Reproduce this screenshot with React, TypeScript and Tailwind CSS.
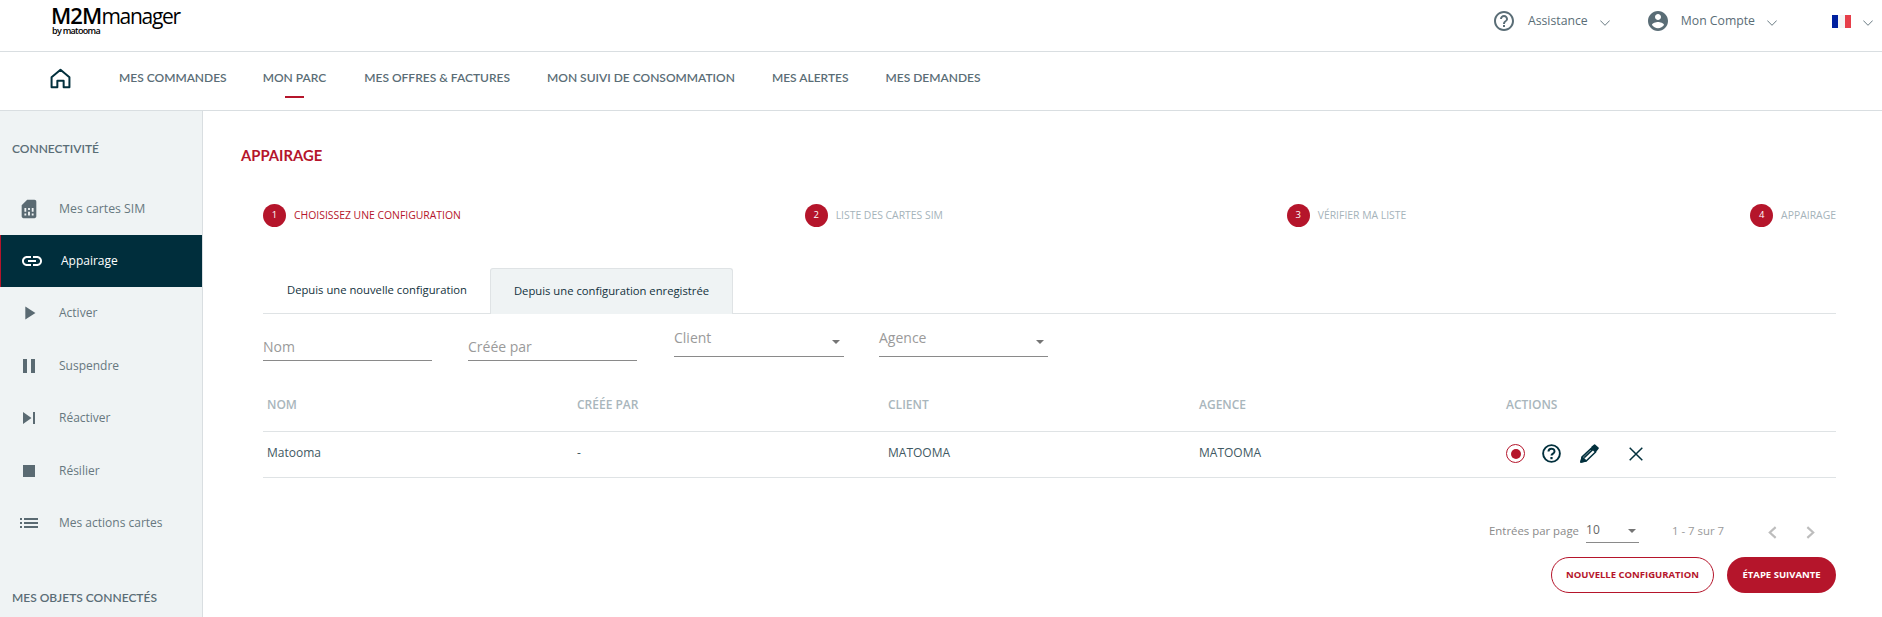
import React from "react";

const P = {
  sim: "M19.99 4c0-1.1-.89-2-1.99-2h-8L4 8v12c0 1.1.9 2 2 2h12c1.1 0 2-.9 2-2l-.01-16zM9 19H7v-2h2v2zm8 0h-2v-2h2v2zm-8-4H7v-4h2v4zm4 4h-2v-4h2v4zm0-6h-2v-2h2v2zm4 2h-2v-4h2v4z",
  link: "M3.9 12c0-1.71 1.39-3.1 3.1-3.1h4V7H7c-2.76 0-5 2.24-5 5s2.24 5 5 5h4v-1.9H7c-1.71 0-3.1-1.39-3.1-3.1zM8 13h8v-2H8v2zm9-6h-4v1.9h4c1.71 0 3.1 1.39 3.1 3.1s-1.39 3.1-3.1 3.1h-4V17h4c2.76 0 5-2.24 5-5s-2.24-5-5-5z",
  play: "M8 5v14l11-7z",
  pause: "M6 19h4V5H6v14zm8-14v14h4V5h-4z",
  next: "M6 18l8.5-6L6 6v12zM16 6v12h2V6h-2z",
  stop: "M6 6h12v12H6z",
  list: "M3 13h2v-2H3v2zm0 4h2v-2H3v2zm0-8h2V7H3v2zm4 4h14v-2H7v2zm0 4h14v-2H7v2zM7 7v2h14V7H7z",
  account: "M12 2C6.48 2 2 6.48 2 12s4.48 10 10 10 10-4.48 10-10S17.52 2 12 2zm0 3c1.66 0 3 1.34 3 3s-1.34 3-3 3-3-1.34-3-3 1.34-3 3-3zm0 14.2c-2.5 0-4.71-1.28-6-3.22.03-1.99 4-3.08 6-3.08 1.99 0 5.97 1.09 6 3.08-1.29 1.94-3.5 3.22-6 3.22z",
  help: "M11 18h2v-2h-2v2zm1-16C6.48 2 2 6.48 2 12s4.48 10 10 10 10-4.48 10-10S17.52 2 12 2zm0 18c-4.41 0-8-3.59-8-8s3.59-8 8-8 8 3.59 8 8-3.59 8-8 8zm0-14c-2.21 0-4 1.79-4 4h2c0-1.1.9-2 2-2s2 .9 2 2c0 2-3 1.75-3 5h2c0-2.25 3-2.5 3-5 0-2.21-1.79-4-4-4z",
};

function MI({ d, className }: { d: string; className: string }) {
  return (
    <svg viewBox="0 0 24 24" fill="currentColor" className={className}>
      <path d={d} />
    </svg>
  );
}

function Chevron() {
  return (
    <svg viewBox="0 0 10 6" fill="none" stroke="#5a6d76" strokeWidth="0.9" className="w-[10px] h-[6px]">
      <path d="M0.3 0.5 L5 5.3 L9.7 0.5" />
    </svg>
  );
}

function Caret({ className }: { className: string }) {
  return <span className={`w-0 h-0 border-l-[4px] border-r-[4px] border-t-[4px] border-l-transparent border-r-transparent border-t-[#757575] ${className}`} />;
}

const navItems = ["MES OFFRES & FACTURES", "MON SUIVI DE CONSOMMATION", "MES ALERTES", "MES DEMANDES"];

function SideRow({ label, d, icon = "w-[24px] h-[24px] ml-[17px] mr-[18px]" }: { label: string; d: string; icon?: string }) {
  return (
    <div className="h-[52.5px] flex items-center text-[#67787f] text-[12px]">
      <MI d={d} className={`${icon} text-[#5a6a72] shrink-0`} />
      <span>{label}</span>
    </div>
  );
}

function Step({ n, label, active }: { n: number; label: string; active?: boolean }) {
  return (
    <div className="flex items-center">
      <span className="w-[23px] h-[23px] rounded-full bg-[#b5152b] text-white text-[9.5px] flex items-center justify-center">{n}</span>
      <span className={`ml-[8px] mt-[1px] text-[10.4px] ${active ? "text-[#b5152b]" : "text-[#a5b3ba]"}`}>{label}</span>
    </div>
  );
}

function TextFilter({ label, className }: { label: string; className: string }) {
  return (
    <div className={`h-[28px] border-b border-[#8a8a8a] text-[14px] leading-[27px] text-[#9a9a9a] ${className}`}>{label}</div>
  );
}

function SelectFilter({ label, className }: { label: string; className: string }) {
  return (
    <div className={`h-[34px] border-b border-[#8a8a8a] text-[14px] flex justify-between text-[#9a9a9a] ${className}`}>
      <span className="leading-[30px]">{label}</span>
      <Caret className="mt-[17px] mr-[4px]" />
    </div>
  );
}

const gridCols = "grid grid-cols-[310px_311px_311px_307px_1fr]";

export default function App() {
  return (
    <div className="h-[617px] w-[1882px] overflow-hidden bg-white flex flex-col font-['Open_Sans',sans-serif]">
      <header className="h-[52px] shrink-0 border-b border-[#d9dee1] flex items-start justify-between pl-[51px]">
        <div className="pt-[3px] text-black leading-none">
          <div className="text-[21px] leading-[24px] tracking-[-1.3px]">
            <span className="font-semibold text-[22px] tracking-[-0.9px]">M2M</span>manager
          </div>
          <div className="ml-[1px] -mt-[1px] text-[9px] leading-[7px] font-semibold tracking-[-0.7px]">by matooma</div>
        </div>
        <div className="flex items-center h-[41px] text-[#5a6d76] text-[12.25px]">
          <MI d={P.help} className="w-[24px] h-[24px]" />
          <span className="ml-[12px] mt-[2px]">Assistance</span>
          <span className="ml-[12px] mt-[4px]"><Chevron /></span>
          <MI d={P.account} className="w-[24px] h-[24px] ml-[36px]" />
          <span className="ml-[11px] mt-[2px]">Mon Compte</span>
          <span className="ml-[12px] mt-[4px]"><Chevron /></span>
          <span className="ml-[55px] mt-[1px] flex w-[19px] h-[13px]">
            <span className="flex-1 bg-[#00209f]" />
            <span className="flex-1 bg-[#f5f5f5]" />
            <span className="flex-1 bg-[#e63f4a]" />
          </span>
          <span className="ml-[12px] mr-[9px] mt-[4px]"><Chevron /></span>
        </div>
      </header>

      <nav className="h-[59px] shrink-0 border-b border-[#d9dee1] flex items-center pl-[50px] pb-[6px] text-[#5a6d76] text-[12px] font-semibold font-['Lato',sans-serif]">
        <svg viewBox="0 0 20 20" fill="none" stroke="#02303d" strokeWidth="1.9" strokeLinejoin="round" className="w-[21px] h-[21px] mr-[48px]">
          <path d="M1.5 8.8 L10 1.6 L18.5 8.8 V18.4 H13 V12.2 H7 V18.4 H1.5 Z" />
        </svg>
        <span>MES COMMANDES</span>
        <span className="relative ml-[36px] mr-[1px]">
          MON PARC
          <span className="absolute left-[22px] top-[27px] w-[19px] h-[2px] bg-[#b5152b]" />
        </span>
        {navItems.map((t) => (
          <span key={t} className="ml-[37px]">{t}</span>
        ))}
      </nav>

      <div className="flex-1 flex min-h-0">
        <aside className="w-[203px] shrink-0 bg-[#eff3f4] border-r border-[#d9dee1] overflow-hidden">
          <div className="h-[72px] pl-[12px] pt-[29px] text-[#5a6d76] text-[12px] leading-[18px] font-semibold font-['Lato',sans-serif]">CONNECTIVITÉ</div>
          <div className="h-[52px] flex items-center text-[#67787f] text-[12.3px]">
            <MI d={P.sim} className="w-[22px] h-[22px] ml-[18px] mr-[19px] text-[#5a6a72] shrink-0" />
            <span>Mes cartes SIM</span>
          </div>
          <div className="h-[52px] flex items-center bg-[#002e3c] border-l border-[#b5152b] text-white text-[12px]">
            <MI d={P.link} className="w-[24px] h-[24px] ml-[19px] mr-[17px] shrink-0" />
            <span>Appairage</span>
          </div>
          <SideRow label="Activer" d={P.play} icon="w-[22px] h-[22px] ml-[18px] mr-[19px]" />
          <SideRow label="Suspendre" d={P.pause} />
          <SideRow label="Réactiver" d={P.next} />
          <SideRow label="Résilier" d={P.stop} />
          <SideRow label="Mes actions cartes" d={P.list} />
          <div className="mt-[39px] pl-[12px] text-[#5a6d76] text-[12px] leading-[18px] font-semibold font-['Lato',sans-serif]">MES OBJETS CONNECTÉS</div>
        </aside>

        <main className="flex-1 min-w-0 pl-[38px] pr-[46px]">
          <h1 className="mt-[35px] text-[#b5152b] text-[14.8px] leading-[18px] font-bold font-['Lato',sans-serif]">APPAIRAGE</h1>
          <div className="ml-[22px]">
            <div className="mt-[40px] flex justify-between h-[23px]">
              <Step n={1} label="CHOISISSEZ UNE CONFIGURATION" active />
              <Step n={2} label="LISTE DES CARTES SIM" />
              <Step n={3} label="VÉRIFIER MA LISTE" />
              <Step n={4} label="APPAIRAGE" />
            </div>
            <div className="mt-[41px] h-[46px] border-b border-[#dfe3e5] flex text-[#12313c] text-[11.25px]">
              <div className="w-[227px] flex items-center pl-[24px]">Depuis une nouvelle configuration</div>
              <div className="w-[243px] h-[46px] flex items-center justify-center bg-[#eff3f4] border border-b-0 border-[#dfe3e5] rounded-t-[3px]">Depuis une configuration enregistrée</div>
            </div>
            <div className="flex items-start">
              <TextFilter label="Nom" className="w-[169px] mt-[19px]" />
              <TextFilter label="Créée par" className="w-[169px] ml-[36px] mt-[19px]" />
              <SelectFilter label="Client" className="w-[170px] ml-[37px] mt-[9px]" />
              <SelectFilter label="Agence" className="w-[169px] ml-[35px] mt-[9px]" />
            </div>
            <div className={`${gridCols} mt-[27px] h-[44px] border-b border-[#dfe3e5] items-center pl-[4px] pb-[10px] text-[#a9b6bc] text-[12px] font-semibold`}>
              <span>NOM</span>
              <span>CRÉÉE PAR</span>
              <span>CLIENT</span>
              <span>AGENCE</span>
              <span>ACTIONS</span>
            </div>
            <div className={`${gridCols} h-[46px] border-b border-[#dfe3e5] items-center pl-[4px] pb-[3px] text-[#3f5963] text-[12px]`}>
              <span>Matooma</span>
              <span>-</span>
              <span>MATOOMA</span>
              <span>MATOOMA</span>
              <div className="flex items-center mt-[1px]">
                <span className="w-[19px] h-[19px] rounded-full border border-[#b5152b] flex items-center justify-center">
                  <span className="w-[10px] h-[10px] rounded-full bg-[#b5152b]" />
                </span>
                <svg viewBox="0 0 19 19" fill="none" className="w-[19px] h-[19px] ml-[17px]">
                  <circle cx="9.5" cy="9.5" r="8.4" stroke="#02303d" strokeWidth="1.9" />
                  <path d="M6.5 7.6 C6.5 3.7 12.5 3.7 12.5 7.4 C12.5 9.6 9.5 9.5 9.5 11.6" stroke="#02303d" strokeWidth="2" />
                  <rect x="8.4" y="13" width="2.2" height="2.2" fill="#02303d" />
                </svg>
                <svg viewBox="0 0 19 19" fill="none" stroke="#02303d" strokeWidth="1.6" strokeLinejoin="round" className="w-[19px] h-[19px] ml-[19px]">
                  <path d="M1 18 L2.2 12.8 L11.6 4 L15.6 8 L6.2 17 Z" />
                  <path d="M1 18 L5.8 16.8 L2.4 13.2 Z" fill="#02303d" />
                  <path d="M4.2 13.6 L12.6 5.6" />
                  <path d="M11.6 3.6 L14.6 1 L18 4.2 L15.4 7.6" fill="#02303d" />
                </svg>
                <svg viewBox="0 0 14 14" fill="none" stroke="#02303d" strokeWidth="1.5" className="w-[14px] h-[14px] ml-[30px]">
                  <path d="M0.7 0.7 L13.3 13.3 M13.3 0.7 L0.7 13.3" />
                </svg>
              </div>
            </div>
            <div className="mt-[40px] flex items-start h-[25px] text-[11.4px] text-[#8a8a8a] pl-[1226px]">
              <span className="mt-[4px] whitespace-nowrap">Entrées par page</span>
              <div className="ml-[7px] w-[53px] h-[25px] border-b border-[#8a8a8a] flex justify-between text-[#666] text-[12px] leading-[24px]">
                <span>10</span>
                <Caret className="mt-[11px] mr-[3px]" />
              </div>
              <span className="ml-[33px] mt-[4px] whitespace-nowrap text-[#9a9a9a]">1 - 7 sur 7</span>
              <svg viewBox="0 0 10 14" fill="none" stroke="#bdbdbd" strokeWidth="2.4" className="w-[9px] h-[13px] ml-[44px] mt-[8px]">
                <path d="M8.5 1 L2 7 L8.5 13" />
              </svg>
              <svg viewBox="0 0 10 14" fill="none" stroke="#bdbdbd" strokeWidth="2.4" className="w-[9px] h-[13px] ml-[29px] mt-[8px]">
                <path d="M1.5 1 L8 7 L1.5 13" />
              </svg>
            </div>
            <div className="mt-[14px] flex justify-end gap-[13px] text-[9.5px] font-bold">
              <button className="w-[163px] h-[36px] rounded-full border border-[#b5152b] text-[#b5152b] bg-white">NOUVELLE CONFIGURATION</button>
              <button className="w-[109px] h-[36px] rounded-full bg-[#b5152b] text-white">ÉTAPE SUIVANTE</button>
            </div>
          </div>
        </main>
      </div>
    </div>
  );
}
